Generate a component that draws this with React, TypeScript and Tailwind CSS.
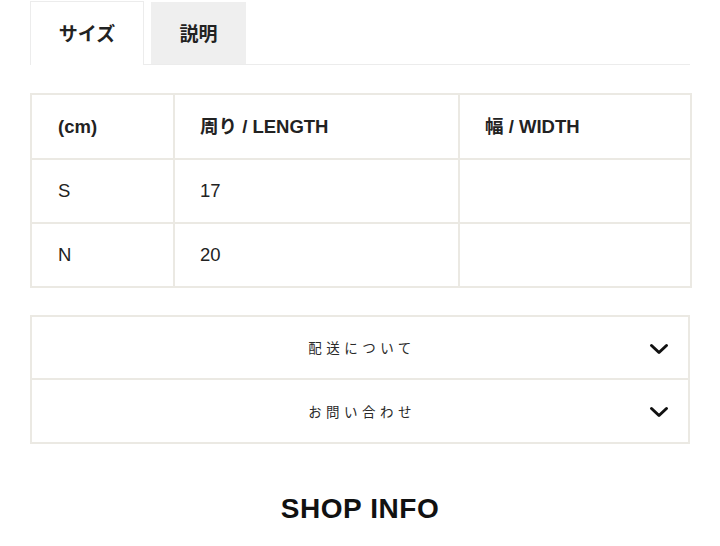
import React from "react";

const font = { fontFamily: '"Liberation Sans", "Noto Sans CJK JP", sans-serif' };

function Chevron() {
  return (
    <svg width="20" height="14" viewBox="0 0 20 14" fill="none">
      <path d="M2.5 3.5 L10 10.5 L17.5 3.5" stroke="#111" strokeWidth="3" strokeLinecap="round" strokeLinejoin="round" />
    </svg>
  );
}

export default function App() {
  const rows = [
    ["S", "17", ""],
    ["N", "20", ""],
  ];
  return (
    <div className="w-[720px] h-[546px] bg-white text-[#222] overflow-hidden" style={font}>
      <div className="px-[30px]">
        {/* Tabs */}
        <div className="flex items-end h-[65px]">
          <div className="w-[114px] h-[64px] border border-b-0 border-[#ececec] bg-white flex items-center justify-center">
            <span className="text-[19px] font-bold pt-[4px]">サイズ</span>
          </div>
          <div className="flex-1 flex items-end h-full border-b border-[#ececec] ml-0">
            <div className="ml-[7px] w-[95px] h-[62px] bg-[#efefef] flex items-center justify-center">
              <span className="text-[19px] font-bold pt-[4px]">説明</span>
            </div>
          </div>
        </div>

        {/* Size table */}
        <table className="mt-[28px] w-[660px] border-collapse table-fixed">
          <colgroup>
            <col className="w-[143px]" />
            <col className="w-[285px]" />
            <col className="w-[232px]" />
          </colgroup>
          <thead>
            <tr className="h-[65px]">
              <th className="border-2 border-[#ebe9e3] text-left pl-[26px] text-[18.5px] font-bold">(cm)</th>
              <th className="border-2 border-[#ebe9e3] text-left pl-[25px] text-[18.5px] font-bold">周り / LENGTH</th>
              <th className="border-2 border-[#ebe9e3] text-left pl-[25px] text-[18.5px] font-bold">幅 / WIDTH</th>
            </tr>
          </thead>
          <tbody>
            {rows.map((r, i) => (
              <tr key={i} className="h-[64px]">
                <td className="border-2 border-[#ebe9e3] pl-[26px] text-[18.5px]">{r[0]}</td>
                <td className="border-2 border-[#ebe9e3] pl-[25px] text-[18.5px]">{r[1]}</td>
                <td className="border-2 border-[#ebe9e3] pl-[25px] text-[18.5px]">{r[2]}</td>
              </tr>
            ))}
          </tbody>
        </table>

        {/* Accordion */}
        <div className="mt-[27px] border-2 border-[#ebe9e3]">
          <div className="relative h-[63px] flex items-center justify-center border-b-2 border-[#ebe9e3]">
            <span className="text-[13.5px] tracking-[0.33em] text-[#2a2a2a] pl-[4px] pt-[4px]">配送について</span>
            <div className="absolute right-[19px] top-1/2 -translate-y-1/2 mt-[1px] flex">
              <Chevron />
            </div>
          </div>
          <div className="relative h-[62px] flex items-center justify-center">
            <span className="text-[13.5px] tracking-[0.33em] text-[#2a2a2a] pl-[4px] pt-[4px]">お問い合わせ</span>
            <div className="absolute right-[19px] top-1/2 -translate-y-1/2 mt-[1px] flex">
              <Chevron />
            </div>
          </div>
        </div>

        {/* Shop info */}
        <div className="mt-[44px] text-center">
          <span className="text-[28px] font-bold tracking-[0.02em] text-[#111]">SHOP INFO</span>
        </div>
      </div>
    </div>
  );
}
